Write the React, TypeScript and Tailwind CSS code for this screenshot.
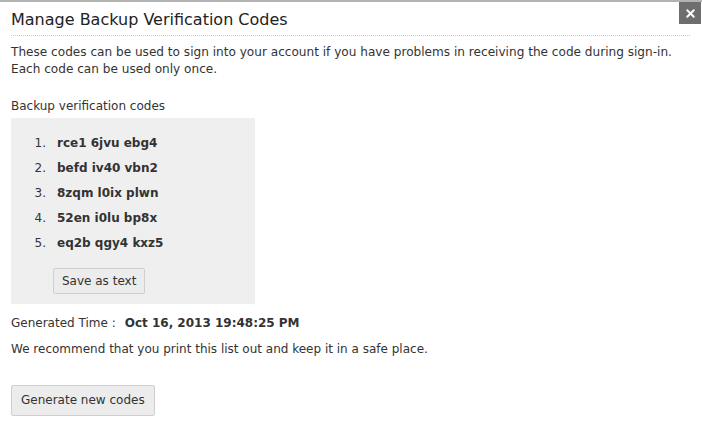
import { X } from "lucide-react";

const codes = ["rce1 6jvu ebg4", "befd iv40 vbn2", "8zqm l0ix plwn", "52en i0lu bp8x", "eq2b qgy4 kxz5"];

export default function App() {
  return (
    <div className="relative w-[702px] h-[432px] bg-white border-t-2 border-[#b3b3b3] text-[#333] font-['DejaVu_Sans',Verdana,sans-serif] text-[12px] leading-[17px]">
      <button className="absolute right-[1px] top-0 w-[22px] h-[22px] bg-[#6e6e6e] flex items-center justify-center">
        <X size={13} strokeWidth={3.5} color="#fff" />
      </button>

      <div className="px-[11px]">
        <h1 className="text-[16px] leading-[22px] pt-[7px] pb-[4px] mr-[1px] border-b border-dotted border-[#c8c8c8] text-[#222]">
          Manage Backup Verification Codes
        </h1>

        <p className="mt-[8px] text-[12.1px]">
          These codes can be used to sign into your account if you have problems in receiving the code during sign-in.
          <br />
          Each code can be used only once.
        </p>

        <p className="mt-[20px]">Backup verification codes</p>

        <div className="mt-[3px] w-[244px] bg-[#efefef] pt-[17px] pb-[10px]">
          <ol className="flex flex-col gap-[8px]">
            {codes.map((c, i) => (
              <li key={c} className="flex">
                <span className="w-[46px] text-right pr-[11px]">{i + 1}.</span>
                <span className="font-bold">{c}</span>
              </li>
            ))}
          </ol>
          <button className="ml-[42px] mt-[16px] h-[26px] px-[8px] border border-[#cfcfcf] rounded-[2px] bg-[#ececec] text-[#333]">
            Save as text
          </button>
        </div>

        <div className="mt-[11px] flex">
          <span>Generated Time :</span>
          <span className="font-bold ml-[9px]">Oct 16, 2013 19:48:25 PM</span>
        </div>

        <p className="mt-[9px]">We recommend that you print this list out and keep it in a safe place.</p>

        <button className="mt-[27px] h-[31px] px-[9px] border border-[#cfcfcf] rounded-[2px] bg-[#ececec] text-[#333]">
          Generate new codes
        </button>
      </div>
    </div>
  );
}
